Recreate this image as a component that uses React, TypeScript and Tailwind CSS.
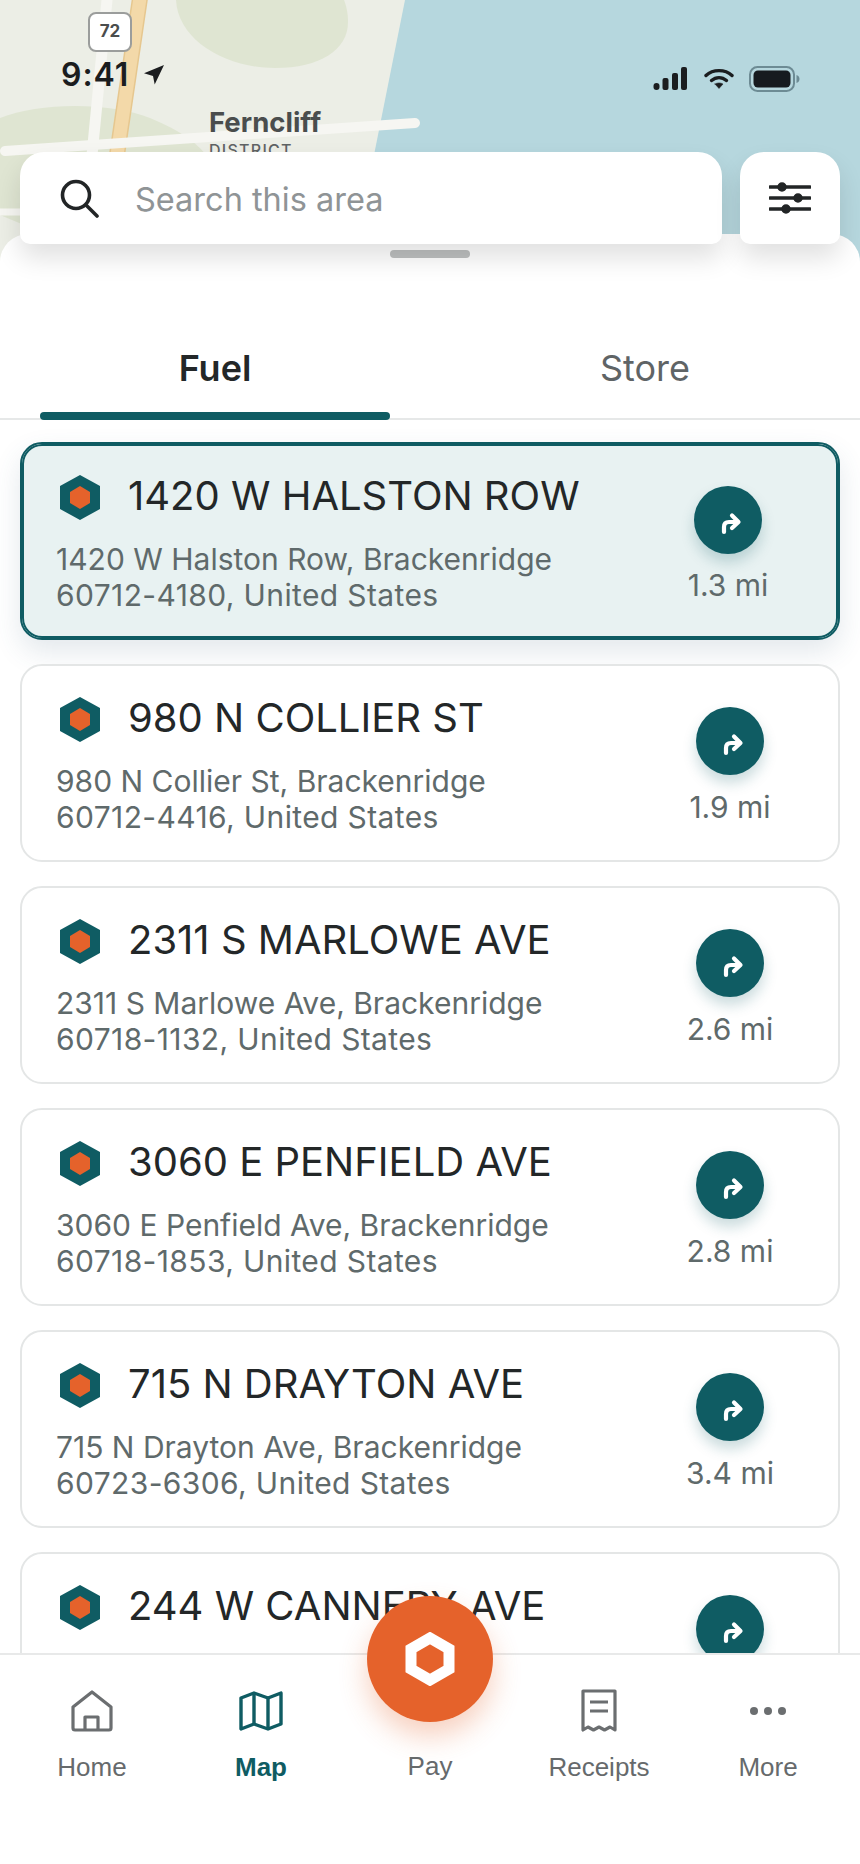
import React from "react";

const stations = [
  { title: "1420 W HALSTON ROW", line1: "1420 W Halston Row, Brackenridge", line2: "60712-4180, United States", dist: "1.3 mi", active: true },
  { title: "980 N COLLIER ST", line1: "980 N Collier St, Brackenridge", line2: "60712-4416, United States", dist: "1.9 mi" },
  { title: "2311 S MARLOWE AVE", line1: "2311 S Marlowe Ave, Brackenridge", line2: "60718-1132, United States", dist: "2.6 mi" },
  { title: "3060 E PENFIELD AVE", line1: "3060 E Penfield Ave, Brackenridge", line2: "60718-1853, United States", dist: "2.8 mi" },
  { title: "715 N DRAYTON AVE", line1: "715 N Drayton Ave, Brackenridge", line2: "60723-6306, United States", dist: "3.4 mi" },
  // only the top of this card shows above the nav
  { title: "244 W CANNERY AVE", line1: "", line2: "", dist: "" },
];

function MapLayer() {
  return (
    <div className="absolute inset-x-0 top-0 h-[300px] overflow-hidden bg-[#eceee6]">
      <svg width="860" height="300" viewBox="0 0 860 300" className="absolute inset-0">
        <path d="M176 0 C178 40 225 68 275 68 C320 68 348 50 348 22 C348 12 346 5 344 0 Z" fill="#dfe5d2" />
        <path d="M0 118 C40 102 110 102 150 118 C180 130 200 145 210 160 L60 240 L0 215 Z" fill="#dfe5d2" />
        <path d="M405 0 L860 0 L860 300 L345 300 Z" fill="#b6d7de" />
        <path d="M107 0 L92 155" stroke="#f6f6f2" strokeWidth="11" strokeLinecap="round" />
        <path d="M140 -2 L117 155" stroke="#e6c78f" strokeWidth="16" />
        <path d="M140 -2 L117 155" stroke="#f3d9a9" strokeWidth="13" />
        <path d="M5 151 L415 123" stroke="#f6f6f2" strokeWidth="10" strokeLinecap="round" />
        <path d="M0 212 L30 212" stroke="#f6f6f2" strokeWidth="7" />
      </svg>
      <div className="absolute left-[88px] top-[12px] flex h-[40px] w-[44px] items-center justify-center rounded-[8px] border-2 border-[#9b9d9c] bg-white text-[17px] font-bold text-[#4a4d4d]">
        72
      </div>
      <div className="absolute left-[209px] top-[106px] text-[27.5px] leading-[32px] font-bold text-[#4a4d4d]">Ferncliff</div>
      <div className="absolute left-[209px] top-[140px] text-[16px] leading-[20px] font-medium tracking-[0.08em] text-[#5f6364]">DISTRICT</div>
    </div>
  );
}

function StatusBar() {
  return (
    <div className="relative flex h-[152px] items-start justify-between pt-[56px] pl-[61px] pr-[60px]">
      <div className="flex items-center gap-[14px] text-[#1b1d1f]">
        <span className="text-[32px] leading-[38px] font-semibold tracking-[0.03em]">9:41</span>
        <svg width="22" height="22" viewBox="0 0 22 22">
          <path d="M21 1 L1 9.3 L10 12 L11.7 20.5 Z" fill="#1b1d1f" />
        </svg>
      </div>
      <div className="flex items-center pt-[10px]">
        <svg width="34" height="24" viewBox="0 0 34 24" fill="#1b1d1f" className="mr-[17px]">
          <rect x="0.5" y="16" width="6" height="7" rx="3" />
          <rect x="9.5" y="11" width="6" height="12" rx="2" />
          <rect x="19" y="6" width="6" height="17" rx="2" />
          <rect x="28" y="0" width="6" height="23" rx="2" />
        </svg>
        <svg width="30" height="22" viewBox="0 0 30 22" fill="none" stroke="#1b1d1f" strokeWidth="3.4" strokeLinecap="round" className="mr-[15px]">
          <path d="M2 7.5 C9 1 21 1 28 7.5" />
          <path d="M7.5 12.5 C12 8.6 18 8.6 22.5 12.5" />
          <path d="M11 16 L15 20.5 L19 16 C16.5 14.5 13.5 14.5 11 16 Z" fill="#1b1d1f" strokeWidth="0.5" />
        </svg>
        <svg width="51" height="26" viewBox="0 0 51 26">
          <rect x="1" y="1" width="44" height="24" rx="7.5" fill="none" stroke="#6d8b94" strokeWidth="2" />
          <rect x="4.5" y="4.5" width="37" height="17" rx="4.5" fill="#161a1f" />
          <path d="M47.5 9 C50 10 50.5 11.5 50.5 13 C50.5 14.5 50 16 47.5 17 Z" fill="#6d8b94" />
        </svg>
      </div>
    </div>
  );
}

function SearchRow() {
  return (
    <div className="relative z-20 flex h-[92px] gap-[18px] px-[20px]">
      <div className="flex flex-1 items-center gap-[36px] rounded-t-[24px] rounded-b-[10px] bg-white pl-[40px] shadow-[0_14px_26px_rgba(0,0,0,0.12)]">
        <svg width="39" height="39" viewBox="0 0 39 39" fill="none" stroke="#222526" strokeWidth="3.6" strokeLinecap="round">
          <circle cx="16" cy="16" r="13.5" />
          <path d="M26 26 L37 37" />
        </svg>
        <span className="pt-[3px] text-[32.5px] leading-[40px] text-[#8f9496]">Search this area</span>
      </div>
      <div className="flex w-[100px] items-center justify-center rounded-t-[24px] rounded-b-[10px] bg-white shadow-[0_14px_26px_rgba(0,0,0,0.12)]">
        <svg width="42" height="34" viewBox="0 0 42 34" fill="#222526" stroke="#222526">
          <path d="M1 6 H41 M1 17 H41 M1 28 H41" strokeWidth="3.6" strokeLinecap="round" />
          <circle cx="13" cy="6" r="4" strokeWidth="1.5" />
          <circle cx="29" cy="17" r="4" strokeWidth="1.5" />
          <circle cx="17" cy="28" r="4" strokeWidth="1.5" />
        </svg>
      </div>
    </div>
  );
}

function StationIcon() {
  return (
    <svg width="40" height="45" viewBox="0 0 40 45" className="ml-[3px] shrink-0">
      <path d="M20 0 L40 11 V34 L20 45 L0 34 V11 Z" fill="#0f5c63" />
      <path d="M20 11 L30 17 V28 L20 34 L10 28 V17 Z" fill="#e5622b" />
    </svg>
  );
}

function StationCard({ title, line1, line2, dist, active }: (typeof stations)[number]) {
  return (
    <div
      className={
        active
          ? "flex h-[198px] shrink-0 justify-between rounded-[22px] border-2 border-[#0f5c63] bg-[#e8f2f2] pt-[31px] pl-[34px] pr-[67px] shadow-[inset_0_0_0_2px_#0f5c63,0_12px_28px_rgba(60,90,120,0.14)]"
          : "flex h-[198px] shrink-0 justify-between rounded-[22px] border-2 border-[#e4e6e6] bg-white pt-[31px] pl-[34px] pr-[65px]"
      }
    >
      <div className="flex flex-col">
        <div className="flex h-[45px] items-center gap-[28px] pl-[1px]">
          <StationIcon />
          <span className="pb-[4px] text-[40px] leading-[48px] text-[#232728]">{title}</span>
        </div>
        <div className="mt-[21px] text-[30px] leading-[36px] text-[#5f6a6b]">
          <div>{line1}</div>
          <div className="tracking-[0.38px]">{line2}</div>
        </div>
      </div>
      <div className={active ? "flex w-[86px] flex-col items-center pt-[11px]" : "flex w-[86px] flex-col items-center pt-[10px]"}>
        <div className="flex h-[68px] w-[68px] shrink-0 items-center justify-center rounded-full bg-[#0f5c63] shadow-[0_8px_14px_rgba(15,92,99,0.22)]">
          <svg width="68" height="68" viewBox="0 0 68 68" fill="none" stroke="#ffffff" strokeWidth="4.2" strokeLinecap="round" strokeLinejoin="round">
            <path d="M30 46 V41 Q30 36 35 36 H43" />
            <path d="M38 29.5 L44.5 36 L38 42" />
          </svg>
        </div>
        <div className={active ? "mt-[14px] text-[30px] leading-[34px] whitespace-nowrap text-[#5f6a6b]" : "mt-[15px] text-[30px] leading-[34px] whitespace-nowrap text-[#5f6a6b]"}>{dist}</div>
      </div>
    </div>
  );
}

function BottomNav() {
  const label = "mt-[18px] font-['Liberation_Sans',sans-serif] text-[26px] leading-[32px] text-[#666a6c]";
  return (
    <div className="relative z-10 grid h-[211px] shrink-0 grid-cols-5 border-t-2 border-[#e8e9e9] bg-white px-[7.5px] pt-[34px]">
      <div className="flex flex-col items-center">
        <svg width="44" height="44" viewBox="0 0 44 44" fill="none" stroke="#6b6e70" strokeWidth="3.2" strokeLinejoin="round">
          <path d="M22 3 L41 18 V39 Q41 41 39 41 H5 Q3 41 3 39 V18 Z" />
          <path d="M15 41 V28 H28 V41" />
        </svg>
        <span className={label}>Home</span>
      </div>
      <div className="flex flex-col items-center">
        <svg width="44" height="44" viewBox="0 0 44 44" fill="none" stroke="#0f5c63" strokeWidth="3.4" strokeLinejoin="round">
          <path d="M2 9 L15 4 L29 9 L42 4 V35 L29 40 L15 35 L2 40 Z" />
          <path d="M15 4 V35 M29 9 V40" />
        </svg>
        <span className="mt-[18px] font-['Liberation_Sans',sans-serif] text-[26px] leading-[32px] font-bold text-[#0f5c63]">Map</span>
      </div>
      <div className="flex flex-col items-center pt-[44px]">
        <span className="mt-[17px] font-['Liberation_Sans',sans-serif] text-[26px] leading-[32px] text-[#666a6c]">Pay</span>
      </div>
      <div className="flex flex-col items-center">
        <svg width="44" height="44" viewBox="0 0 44 44" fill="none" stroke="#6b6e70" strokeWidth="3.2" strokeLinejoin="round">
          <path d="M6 2 H38 V41 L33 38 L27.5 41 L22 38 L16.5 41 L11 38 L6 41 Z" />
          <path d="M13 13 H31 M13 22 H31" />
        </svg>
        <span className={label}>Receipts</span>
      </div>
      <div className="flex flex-col items-center">
        <svg width="44" height="44" viewBox="0 0 44 44" fill="#6b6e70">
          <circle cx="8" cy="22" r="4" />
          <circle cx="22" cy="22" r="4" />
          <circle cx="36" cy="22" r="4" />
        </svg>
        <span className={label}>More</span>
      </div>
      <div className="absolute left-[367px] top-[-59px] flex h-[126px] w-[126px] items-center justify-center rounded-full bg-[#e5622b] shadow-[0_14px_28px_rgba(229,98,43,0.3)]">
        <svg width="50" height="54" viewBox="0 0 50 54" fill="none" stroke="#ffffff" strokeWidth="11">
          <path d="M25 6 L44 17 V37 L25 48 L6 37 V17 Z" />
        </svg>
      </div>
    </div>
  );
}

export default function App() {
  return (
    <div className="relative flex h-[1864px] w-[860px] flex-col overflow-hidden bg-white font-['Inter',sans-serif]">
      <MapLayer />
      <StatusBar />
      <SearchRow />
      <div className="relative z-10 -mt-[10px] flex min-h-0 flex-1 flex-col rounded-t-[28px] bg-white">
        <div className="mx-auto mt-[16px] h-[8px] w-[80px] rounded-full bg-[#bdbfbf]" />
        <div className="mt-[88px] grid shrink-0 grid-cols-2 border-b-2 border-[#e6e8e8]">
          <div className="flex flex-col items-center">
            <span className="text-[36px] leading-[44px] font-semibold text-[#232728]">Fuel</span>
            <div className="mt-[22px] -mb-[2px] h-[8px] w-[350px] rounded-full bg-[#0f5c63]" />
          </div>
          <div className="flex flex-col items-center">
            <span className="text-[36px] leading-[44px] text-[#5f6466]">Store</span>
          </div>
        </div>
        <div className="flex min-h-0 flex-1 flex-col gap-[24px] overflow-hidden px-[20px] pt-[22px]">
          {stations.map((s) => (
            <StationCard key={s.title} {...s} />
          ))}
        </div>
        <BottomNav />
      </div>
    </div>
  );
}
